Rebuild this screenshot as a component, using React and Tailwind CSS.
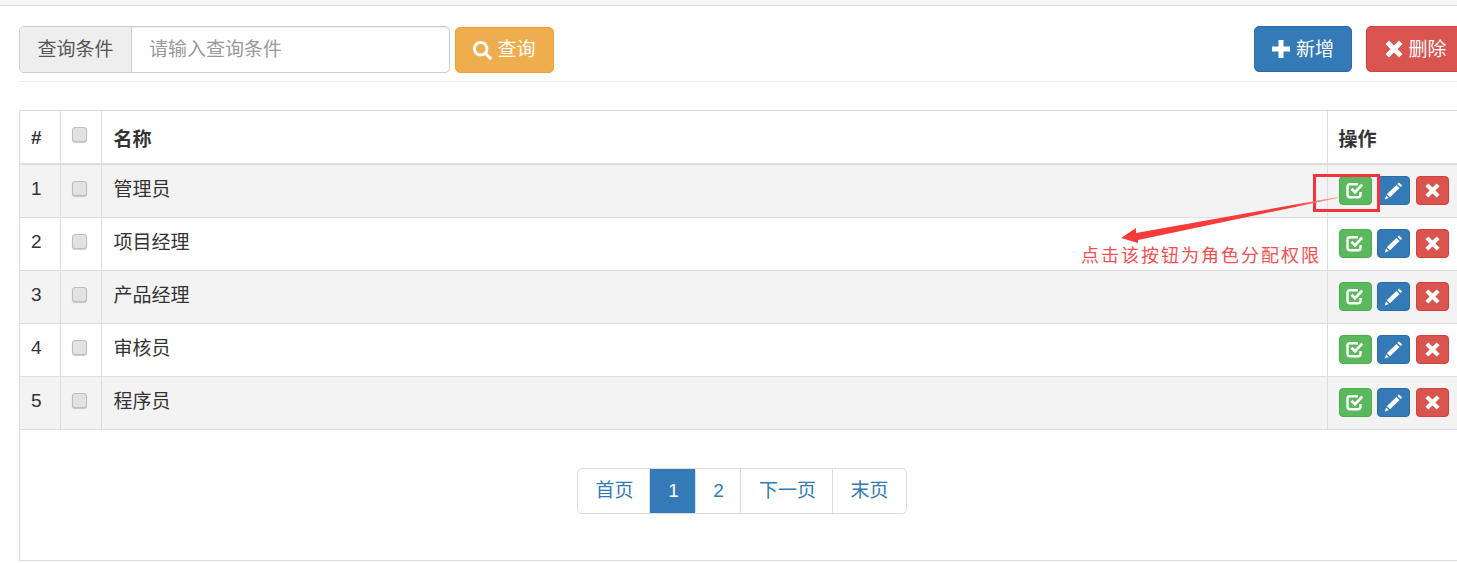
import { FaSearch } from 'react-icons/fa';

const roles = ['管理员', '项目经理', '产品经理', '审核员', '程序员'];
const font = "font-['Liberation_Sans','Noto_Sans_CJK_SC',sans-serif]";

function PlusIcon() {
  return (
    <svg className="-mt-[3px]" width="18" height="18" viewBox="0 0 18 18" fill="currentColor">
      <path d="M6.5 0h5v6.5H18v5h-6.5V18h-5v-6.5H0v-5h6.5z" />
    </svg>
  );
}

function CrossIcon({ size, className }) {
  return (
    <svg className={className} width={size} height={size} viewBox="0 0 18 18" fill="currentColor">
      <path d="M4 0.5 9 5.5 14 0.5 17.5 4 12.5 9 17.5 14 14 17.5 9 12.5 4 17.5 0.5 14 5.5 9 0.5 4z" />
    </svg>
  );
}

function CheckIcon() {
  return (
    <svg width="18" height="17" viewBox="0 0 18 17" fill="none" stroke="currentColor">
      <path d="M12 2.2H4a2.5 2.5 0 0 0-2.5 2.5v8a2.5 2.5 0 0 0 2.5 2.5h8a2.5 2.5 0 0 0 2.5-2.5V10" strokeWidth="2.4" />
      <path d="M5.5 6.8 9 10.2 16.2 2.6" strokeWidth="2.8" />
    </svg>
  );
}

function PencilIcon() {
  return (
    <svg width="19" height="18" viewBox="0 0 19 18" fill="currentColor">
      <path d="M15 0.5 18.2 3.4 16.6 5 13.4 2.1z" />
      <path d="M12.4 3.1 15.6 6 6 15.2 2.8 12.3z" />
      <path d="M2 13.4 4.9 16 0.8 17.6z" />
    </svg>
  );
}

function Checkbox({ className }) {
  return <div className={`w-[15px] h-[15px] rounded-[3px] border border-[#bdbdbd] bg-[#e2e2e2] shadow-[0_1px_1px_rgba(0,0,0,0.2)] ml-[11px] ${className}`} />;
}

function RowBtn({ bg, border, children }) {
  return (
    <span className={`w-[33px] h-[29px] rounded-[4px] border flex items-center justify-center text-white ${bg} ${border}`}>
      {children}
    </span>
  );
}

function PageLink({ children, className }) {
  return (
    <a className={`h-[46px] flex items-center justify-center border border-[#ddd] -ml-px text-[#337ab7] pt-[1px] ${className}`}>
      {children}
    </a>
  );
}

export default function App() {
  return (
    <div className={`relative w-[1457px] h-[563px] overflow-hidden bg-white text-[#333] text-[19px] ${font}`}>
      <div className="h-[6px] bg-[#f5f5f5] border-b border-[#ddd]" />

      <div className="w-[1500px] pl-[19px]">
        {/* barra de busqueda */}
        <div className="flex pt-[20px] pb-[8px] border-b border-[#eee] w-[1481px]">
          <div className="flex w-[431px] h-[47px] border border-[#ccc] rounded-[5px] overflow-hidden">
            <div className="w-[112px] bg-[#eee] border-r border-[#ccc] flex items-center justify-center pt-[1px] text-[#555]">查询条件</div>
            <div className="flex-1 flex items-center pl-[17px] pt-[1px] text-[#999] shadow-[inset_0_1px_1px_rgba(0,0,0,0.075)]">请输入查询条件</div>
          </div>
          <button className="ml-[5px] mt-px w-[99px] h-[46px] rounded-[5px] border border-[#eea236] bg-[#f0ad4e] text-white flex items-center justify-center gap-[5px] pt-[1px]">
            <FaSearch className="text-[19px]" />查询
          </button>
          <button className="ml-[700px] w-[98px] h-[46px] rounded-[5px] border border-[#2e6da4] bg-[#337ab7] text-white flex items-center justify-center gap-[6px] pt-[3px]">
            <PlusIcon />新增
          </button>
          <button className="ml-[14px] w-[98px] h-[46px] rounded-[5px] border border-[#d43f3a] bg-[#d9534f] text-white flex items-center justify-center gap-[5px] pt-[3px] pl-[2px]">
            <CrossIcon size={18} className="-mt-[3px]" />删除
          </button>
        </div>

        {/* panel con tabla */}
        <div className="mt-[28px] w-[1481px] h-[451px] border border-[#ddd] border-r-0">
          <table className="w-full border-collapse table-fixed">
            <colgroup>
              <col className="w-[40px]" />
              <col className="w-[41px]" />
              <col />
              <col className="w-[173px]" />
            </colgroup>
            <thead>
              <tr className="h-[53px] border-b-[2px] border-[#ddd] font-bold">
                <th className="text-center border-r border-[#ddd] pt-[2px] pr-[7px]">#</th>
                <th className="border-r border-[#ddd]"><Checkbox className="-mt-[6px]" /></th>
                <th className="text-left pl-[12px] border-r border-[#ddd] pt-[6px]">名称</th>
                <th className="text-left pl-[11px] pt-[6px]">操作</th>
              </tr>
            </thead>
            <tbody>
              {roles.map((name, i) => (
                <tr key={name} className={`h-[53px] border-b border-[#ddd] ${i % 2 === 0 ? 'bg-[#f3f3f3]' : 'bg-white'}`}>
                  <td className="text-center border-r border-[#ddd] pb-[3px] pr-[7px]">{i + 1}</td>
                  <td className="border-r border-[#ddd] pb-[5px]"><Checkbox /></td>
                  <td className="pl-[12px] border-r border-[#ddd] pb-[1px]">{name}</td>
                  <td className="pl-[11px]">
                    <div className="flex">
                      <RowBtn bg="bg-[#5cb85c]" border="border-[#4cae4c]"><CheckIcon /></RowBtn>
                      <span className="w-[5px]" />
                      <RowBtn bg="bg-[#337ab7]" border="border-[#2e6da4]"><PencilIcon /></RowBtn>
                      <span className="w-[6px]" />
                      <RowBtn bg="bg-[#d9534f]" border="border-[#d43f3a]"><CrossIcon size={15} /></RowBtn>
                    </div>
                  </td>
                </tr>
              ))}
            </tbody>
          </table>

          <div className="flex mt-[38px] ml-[557px]">
            <PageLink className="w-[73px] ml-0 rounded-l-[5px] pl-[2px]">首页</PageLink>
            <PageLink className="w-[47px] bg-[#337ab7] border-[#337ab7] text-white pl-[2px]">1</PageLink>
            <PageLink className="w-[46px] border-l-0 pl-[2px]">2</PageLink>
            <PageLink className="w-[93px] pl-[2px]">下一页</PageLink>
            <PageLink className="w-[75px] rounded-r-[5px]">末页</PageLink>
          </div>
        </div>
      </div>

      {/* anotacion roja sobre la captura */}
      <div className="absolute left-[1313px] top-[174px] w-[67px] h-[38px] border-[3px] border-[#f5333f]" />
      <svg className="absolute left-0 top-0" width="1457" height="563">
        <defs>
          <linearGradient id="cola" gradientUnits="userSpaceOnUse" x1="1338" y1="197" x2="1295" y2="205">
            <stop offset="0" stopColor="#f9b0b0" />
            <stop offset="1" stopColor="#f73a3a" />
          </linearGradient>
        </defs>
        <polygon points="1338,197 1136,233 1136,228 1121,238 1138,243 1138,240 1338,198" fill="url(#cola)" />
      </svg>
      <div className="absolute left-[1081px] top-[242px] text-[18px] tracking-[2px] leading-[28px] text-[#f55050] whitespace-nowrap">点击该按钮为角色分配权限</div>
    </div>
  );
}
